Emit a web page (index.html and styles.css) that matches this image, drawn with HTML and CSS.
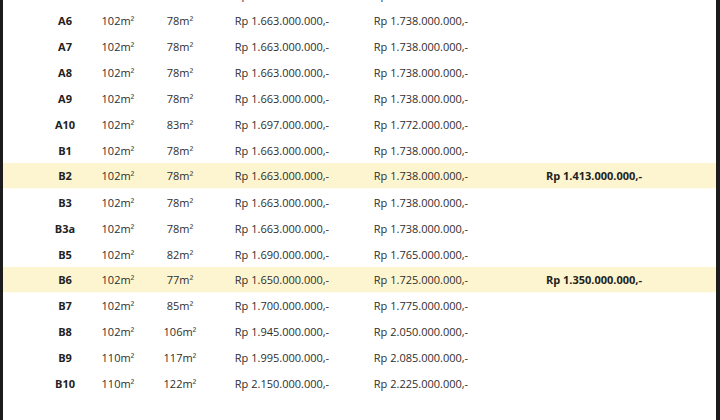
FILE: index.html
```html
<!DOCTYPE html>
<html>
<head>
<meta charset="utf-8">
<link rel="stylesheet" href="styles.css">
</head>
<body>
<main class="sheet">
  <div class="table">
    <div class="row"><span class="code">A5</span><span>102m²</span><span>78m²</span><span>Rp 1.663.000.000,-</span><span>Rp 1.738.000.000,-</span><span></span></div>
    <div class="row"><span class="code">A6</span><span>102m²</span><span>78m²</span><span>Rp 1.663.000.000,-</span><span>Rp 1.738.000.000,-</span><span></span></div>
    <div class="row"><span class="code">A7</span><span>102m²</span><span>78m²</span><span>Rp 1.663.000.000,-</span><span>Rp 1.738.000.000,-</span><span></span></div>
    <div class="row"><span class="code">A8</span><span>102m²</span><span>78m²</span><span>Rp 1.663.000.000,-</span><span>Rp 1.738.000.000,-</span><span></span></div>
    <div class="row"><span class="code">A9</span><span>102m²</span><span>78m²</span><span>Rp 1.663.000.000,-</span><span>Rp 1.738.000.000,-</span><span></span></div>
    <div class="row"><span class="code">A10</span><span>102m²</span><span>83m²</span><span>Rp 1.697.000.000,-</span><span>Rp 1.772.000.000,-</span><span></span></div>
    <div class="row"><span class="code">B1</span><span>102m²</span><span>78m²</span><span>Rp 1.663.000.000,-</span><span>Rp 1.738.000.000,-</span><span></span></div>
    <div class="row hl"><span class="code">B2</span><span>102m²</span><span>78m²</span><span>Rp 1.663.000.000,-</span><span>Rp 1.738.000.000,-</span><span class="promo">Rp 1.413.000.000,-</span></div>
    <div class="row"><span class="code">B3</span><span>102m²</span><span>78m²</span><span>Rp 1.663.000.000,-</span><span>Rp 1.738.000.000,-</span><span></span></div>
    <div class="row"><span class="code">B3a</span><span>102m²</span><span>78m²</span><span>Rp 1.663.000.000,-</span><span>Rp 1.738.000.000,-</span><span></span></div>
    <div class="row"><span class="code">B5</span><span>102m²</span><span>82m²</span><span>Rp 1.690.000.000,-</span><span>Rp 1.765.000.000,-</span><span></span></div>
    <div class="row hl"><span class="code">B6</span><span>102m²</span><span>77m²</span><span>Rp 1.650.000.000,-</span><span>Rp 1.725.000.000,-</span><span class="promo">Rp 1.350.000.000,-</span></div>
    <div class="row"><span class="code">B7</span><span>102m²</span><span>85m²</span><span>Rp 1.700.000.000,-</span><span>Rp 1.775.000.000,-</span><span></span></div>
    <div class="row"><span class="code">B8</span><span>102m²</span><span>106m²</span><span>Rp 1.945.000.000,-</span><span>Rp 2.050.000.000,-</span><span></span></div>
    <div class="row"><span class="code">B9</span><span>110m²</span><span>117m²</span><span>Rp 1.995.000.000,-</span><span>Rp 2.085.000.000,-</span><span></span></div>
    <div class="row"><span class="code">B10</span><span>110m²</span><span>122m²</span><span>Rp 2.150.000.000,-</span><span>Rp 2.225.000.000,-</span><span></span></div>
  </div>
</main>
</body>
</html>
```

FILE: styles.css
```css
html, body {
  margin: 0;
  padding: 0;
  height: 100%;
  overflow: hidden;
}
body {
  background: #1c1c1c;
  font-family: "Open Sans", "Liberation Sans", sans-serif;
  font-size: 11px;
  color: #2e2e2e;
}
.sheet {
  margin: 0 4px 0 3px;
  height: 100%;
  background: #ffffff;
  overflow: hidden;
}
.table {
  margin-top: -19px;
}
.row {
  display: grid;
  grid-template-columns: 52px 54px 70px 134px 144px 202px;
  padding-left: 36px;
  height: 26px;
  align-items: center;
  text-align: center;
  white-space: nowrap;
}
.row:nth-child(n+13) {
  height: 25.8px;
}
.row.hl {
  background: #fdf5cf;
  border-bottom: 1px solid #fffdf2;
  height: 25px;
}
.code {
  font-weight: 700;
  color: #222222;
}
.promo {
  font-weight: 700;
  color: #222222;
}
```
